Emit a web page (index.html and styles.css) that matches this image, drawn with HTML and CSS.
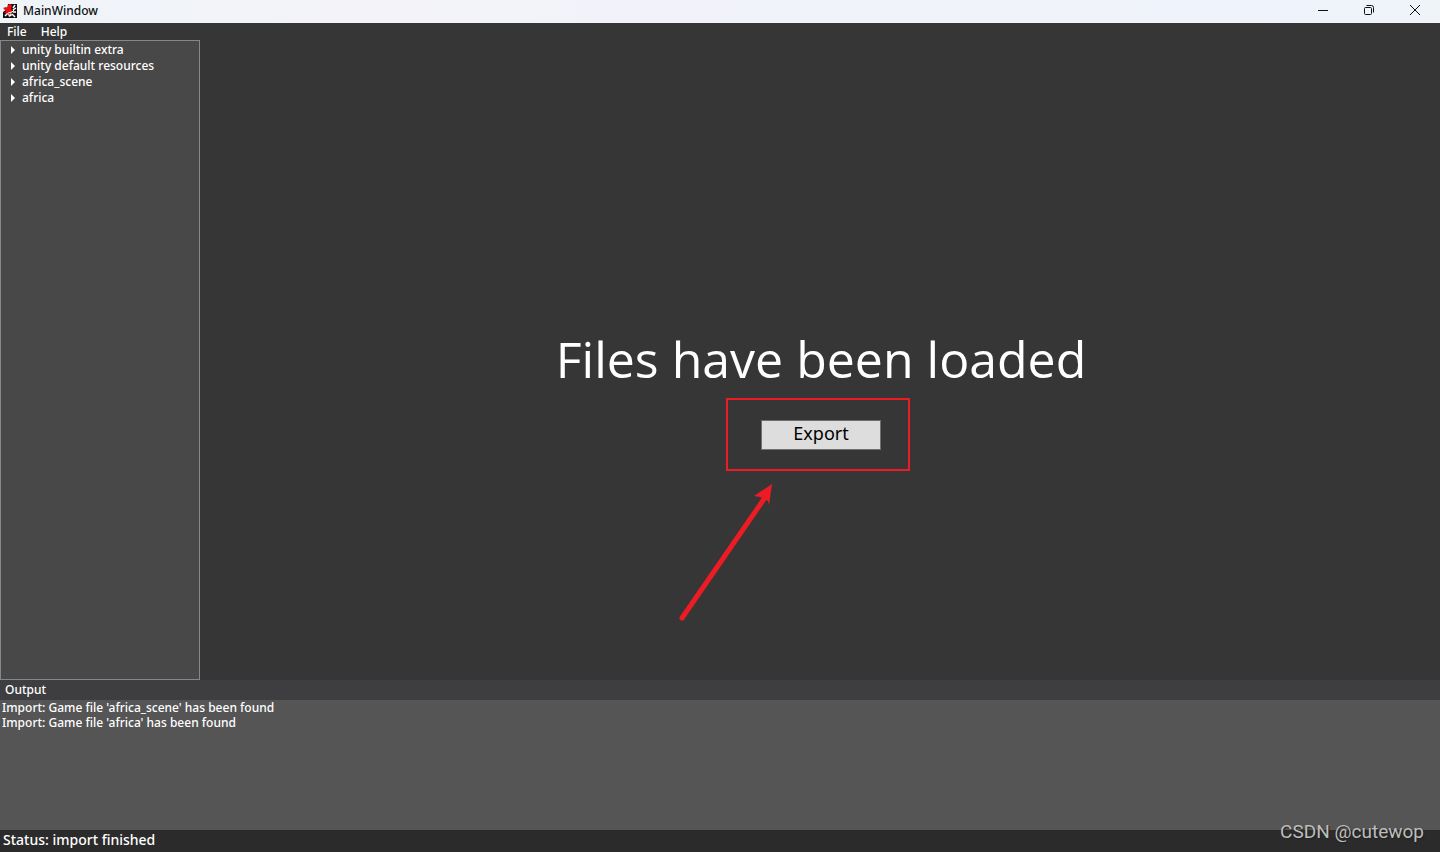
FILE: index.html
```html
<!DOCTYPE html>
<html lang="en">
<head>
<meta charset="utf-8">
<title>MainWindow</title>
<link rel="stylesheet" href="styles.css">
</head>
<body>
<div class="window">
  <header class="titlebar">
    <svg class="logo" viewBox="0 0 14 14" aria-hidden="true">
      <path fill="#111" d="M5 0h9v14H0V8l4-3z"/>
      <path fill="none" stroke="#fff" stroke-width="1.500" d="M10 4l2-3M10 6l3-2M10 8h3M9 10l3 3M2 12l3-3"/>
      <path fill="#fff" d="M5 10l3-1 1 2-1 1-2 1z"/>
      <path fill="#f00d12" d="M0 4l3-1 2 1V1l2-1 2 1-1 4 2 2v2L8 8l-1 3-3-2-3 0 2-2z"/>
      <path fill="none" stroke="#fff" d="M5 9l4-1 2-2"/>
    </svg>
    <h1 class="title">MainWindow</h1>
    <div class="controls">
      <button class="control" type="button" aria-label="Minimize"><svg viewBox="0 0 12 12"><path d="M1 6.500h10"/></svg></button>
      <button class="control" type="button" aria-label="Restore"><svg viewBox="0 0 12 12"><rect x="1.500" y="3.500" width="7" height="7" rx="1"/><path d="M3.500 1.500h5a2 2 0 0 1 2 2v5"/></svg></button>
      <button class="control" type="button" aria-label="Close"><svg viewBox="0 0 12 12"><path d="M1 1l10 10M11 1L1 11"/></svg></button>
    </div>
  </header>
  <nav class="menu">
    <button class="menu-item" type="button">File</button>
    <button class="menu-item" type="button">Help</button>
  </nav>
  <main class="workspace">
    <ul class="tree">
      <li class="node"><svg class="caret" viewBox="0 0 4 8"><path d="M0 0l4 4-4 4z"/></svg>unity builtin extra</li>
      <li class="node"><svg class="caret" viewBox="0 0 4 8"><path d="M0 0l4 4-4 4z"/></svg>unity default resources</li>
      <li class="node"><svg class="caret" viewBox="0 0 4 8"><path d="M0 0l4 4-4 4z"/></svg>africa_scene</li>
      <li class="node"><svg class="caret" viewBox="0 0 4 8"><path d="M0 0l4 4-4 4z"/></svg>africa</li>
    </ul>
    <section class="stage">
      <h2 class="message">Files have been loaded</h2>
      <div class="action">
        <button class="export" type="button">Export</button>
        <div class="highlight"></div>
        <svg class="arrow" viewBox="0 0 94 138" aria-hidden="true">
          <path d="M4 134L86 15" stroke="#ed1c24" stroke-width="5" stroke-linecap="round"/>
          <path d="M94 0L76 12l6 1 8 4 1 4z" fill="#ed1c24"/>
        </svg>
      </div>
    </section>
  </main>
  <section class="output">
    <h2 class="output-title">Output</h2>
    <div class="log">
      <p class="line">Import: Game file 'africa_scene' has been found</p>
      <p class="line">Import: Game file 'africa' has been found</p>
    </div>
  </section>
  <footer class="status">Status: import finished</footer>
  <div class="watermark">CSDN @cutewop</div>
</div>
</body>
</html>
```
FILE: styles.css
```css
* { box-sizing: border-box; }
body {
  margin: 0;
  font: 500 12px/16px "Noto Sans", "Open Sans", sans-serif;
  color: #fff;
}
h1, h2, p, ul { margin: 0; padding: 0; font: inherit; }
button { margin: 0; padding: 0; border: 0; background: none; font: inherit; color: inherit; }
.window {
  position: relative;
  display: flex;
  flex-direction: column;
  height: 100vh;
  background: #363636;
}
.titlebar {
  display: flex;
  align-items: center;
  height: 23px;
  padding-left: 3px;
  padding-bottom: 1px;
  background: linear-gradient(90deg, #eff4f9, #f3f3f9 25%, #eff3fb 90%, #eff4f9);
  color: #111;
}
.logo { width: 14px; height: 14px; margin-right: 6px; }
.title { flex: 1; }
.controls { display: flex; padding-right: 2px; }
.control { display: grid; place-items: center; width: 46px; height: 22px; padding-bottom: 2px; }
.control svg { width: 12px; height: 12px; fill: none; stroke: #111; }
.menu { display: flex; gap: 14px; padding-left: 7px; height: 17px; }
.workspace { flex: 1; display: flex; min-height: 0; }
.tree {
  width: 200px;
  padding: 1px 0 0 10px;
  border: 1px solid #828790;
  background: #484848;
  list-style: none;
}
.node { display: flex; align-items: center; gap: 7px; }
.caret { width: 4px; height: 8px; fill: #fff; }
.stage {
  flex: 1;
  display: flex;
  flex-direction: column;
  align-items: center;
  justify-content: center;
  padding: 56px 0 0 2px;
}
.message { font: 400 50px/66px "Open Sans", "Noto Sans", sans-serif; }
.action { position: relative; margin-top: 28px; }
.export {
  display: block;
  width: 120px;
  height: 30px;
  padding-bottom: 4px;
  border: 1px solid #707070;
  background: #ddd;
  color: #000;
  font-size: 18px;
  font-weight: 400;
  line-height: 24px;
}
.highlight {
  position: absolute;
  top: -22px;
  left: -35px;
  width: 184px;
  height: 73px;
  border: 2px solid #ed1c24;
  pointer-events: none;
}
.arrow { position: absolute; top: 64px; left: -83px; width: 94px; height: 138px; fill: none; }
.output-title { height: 20px; padding: 2px 5px; background: #3e3e40; }
.log { height: 130px; background: #555; }
.line { padding: 0 2px; line-height: 15px; }
.status { height: 22px; padding-left: 3px; background: #2b2b2b; font-size: 14px; line-height: 20px; }
.watermark {
  position: absolute;
  right: 16px;
  bottom: 8px;
  color: #bdbdbd;
  font: 400 19px/24px Roboto, sans-serif;
  text-shadow: 1px 1px 1px #222;
}
```
